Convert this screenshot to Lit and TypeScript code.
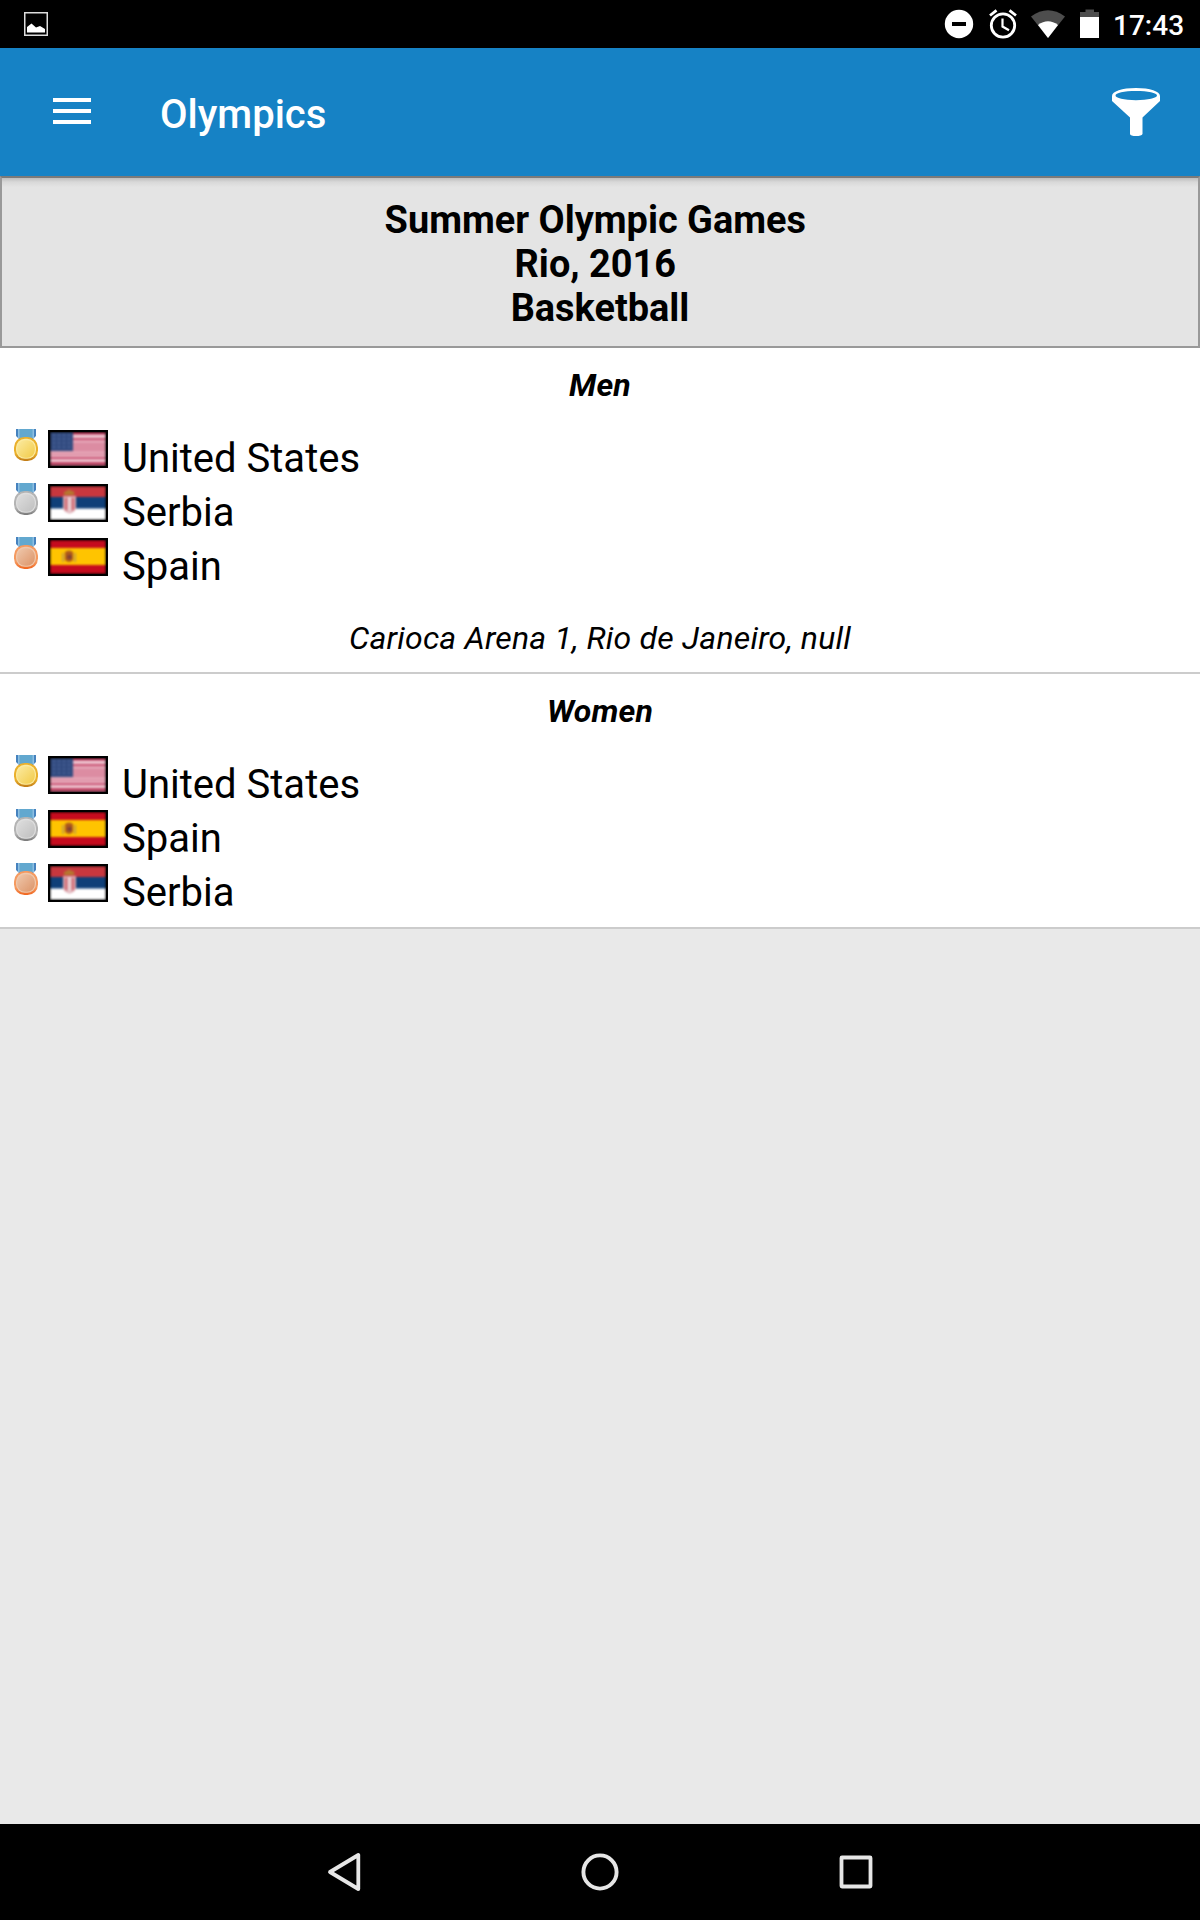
import { LitElement, html, css, svg } from "lit";
import { customElement, property } from "lit/decorators.js";

type Medal = "gold" | "silver" | "bronze";
type Country = "us" | "rs" | "es";
interface Result { medal: Medal; country: Country; }
interface Competition { title: string; results: Result[]; venue?: string; }

const NAMES: Record<Country, string> = { us: "United States", rs: "Serbia", es: "Spain" };

const COMPETITIONS: Competition[] = [
  {
    title: "Men",
    results: [
      { medal: "gold", country: "us" },
      { medal: "silver", country: "rs" },
      { medal: "bronze", country: "es" },
    ],
    venue: "Carioca Arena 1, Rio de Janeiro, null",
  },
  {
    title: "Women",
    results: [
      { medal: "gold", country: "us" },
      { medal: "silver", country: "es" },
      { medal: "bronze", country: "rs" },
    ],
  },
];

// Face highlight, face shade, rim, lower rim.
const MEDAL_COLORS: Record<Medal, [string, string, string, string]> = {
  gold: ["#fbeaa0", "#f2cb48", "#eab02c", "#c07a14"],
  silver: ["#dedede", "#bfbfbf", "#b4b4b4", "#777777"],
  bronze: ["#efc8ac", "#dc9468", "#f59a60", "#f0641c"],
};

@customElement("medal-icon")
export class MedalIcon extends LitElement {
  @property() kind: Medal = "gold";
  static styles = css`
    :host { display: block; width: 32px; height: 32px; overflow: hidden; }
    svg { display: block; overflow: visible; filter: blur(0.6px); }
  `;
  render() {
    const [light, mid, edge, dark] = MEDAL_COLORS[this.kind];
    return html`<svg width="32" height="32" viewBox="0 0 32 32">
      <defs>
        <linearGradient id="face" x1="0" y1="0" x2="1" y2="1">
          <stop offset="0" stop-color=${light}></stop><stop offset="1" stop-color=${mid}></stop>
        </linearGradient>
        <linearGradient id="rim" x1="0" y1="0" x2="0" y2="1">
          <stop offset="0" stop-color=${edge}></stop><stop offset="0.7" stop-color=${edge}></stop><stop offset="1" stop-color=${dark}></stop>
        </linearGradient>
      </defs>
      <path d="M6 -2H26V7L23 10H9L6 7Z" fill="#4682be"></path>
      <path d="M8 -2H9.800V9H8ZM22.200 -2H24V9H22.200Z" fill="#8cc0e2"></path>
      <path d="M9.800 -2H22.200V10H9.800Z" fill="#62a8cf"></path>
      <rect x="4" y="8" width="24" height="24" rx="10.500" fill="url(#rim)"></rect>
      <rect x="6" y="9.800" width="20" height="20" rx="8.800" fill=${light}></rect>
      <rect x="7.200" y="11.200" width="17.600" height="17.600" rx="7.800" fill="url(#face)"></rect>
    </svg>`;
  }
}

@customElement("country-flag")
export class CountryFlag extends LitElement {
  @property() code: Country = "us";
  static styles = css`
    :host { display: block; box-sizing: border-box; width: 60px; height: 38px; border: 2px solid #000; background: #000; overflow: hidden; }
    svg { display: block; filter: blur(0.8px); }
  `;
  private art() {
    switch (this.code) {
      case "us":
        return svg`
          <rect width="56" height="34" fill="#dc8ca2"></rect>
          <path d="M0 1H56M0 31.500H56" stroke="#b5294e" stroke-width="2"></path>
          <path d="M0 4.500H56M0 28.500H56" stroke="#f5dbe2" stroke-width="2"></path>
          <path d="M0 9.500H56M0 20.500H56M0 24H56" stroke="#eab5c3" stroke-width="1.400"></path>
          <path d="M0 7H56M0 26.300H56" stroke="#c44468" stroke-width="1.600"></path>
          <rect width="23" height="19" fill="#324b80"></rect>
          <path d="M3 3H22M3 7H22M3 11H22M3 15H22" stroke="#4d689a" stroke-width="1.400" stroke-dasharray="2 3"></path>`;
      case "rs":
        return svg`
          <rect width="56" height="12" fill="#c8373e"></rect>
          <rect y="11" width="56" height="12" fill="#0f3f78"></rect>
          <rect y="22.500" width="56" height="11.500" fill="#fff"></rect>
          <path d="M14 9C13 4 17 6 19 3C21 6 26 4 24 9Z" fill="#b5782f"></path>
          <path d="M13 10H26V22Q25 26 19.500 27.500Q14 26 13 22Z" fill="#dca7ae"></path>
          <path d="M16 12V24M23 12V24" stroke="#cf6069" stroke-width="1.800"></path>
          <path d="M19.500 11V26" stroke="#f3e3e5" stroke-width="1.800"></path>`;
      default:
        return svg`
          <rect width="56" height="34" fill="#c60b1e"></rect>
          <rect y="8" width="56" height="17" fill="#ffc400"></rect>
          <path d="M13 13V22M25 13V22" stroke="#c9a13a" stroke-width="2"></path>
          <path d="M15 12Q19 9 23 12V20Q19 24 15 20Z" fill="#ad5a1d"></path>
          <circle cx="19.500" cy="17" r="2.200" fill="#7b3f36"></circle>`;
    }
  }
  render() {
    return html`<svg width="56" height="34" viewBox="0 0 56 34">
      ${this.art()}
      <rect x="0" y="0" width="56" height="34" fill="none" stroke="#000" stroke-width="0.800"></rect>
    </svg>`;
  }
}

@customElement("app-root")
export class AppRoot extends LitElement {
  static styles = css`
    :host { display: flex; flex-direction: column; width: 1200px; height: 1920px; background: #e9e9e9; color: #000; font-family: Roboto, sans-serif; overflow: hidden; }
    svg { display: block; }
    .status { flex: none; height: 48px; background: #000; color: #fff; display: flex; align-items: center; justify-content: space-between; padding: 0 16px 0 24px; }
    .tray { display: flex; align-items: center; }
    .clock { font-size: 28px; font-weight: 500; line-height: 46px; margin-left: 13px; padding-top: 3px; width: 71px; white-space: nowrap; }
    .bar { flex: none; height: 128px; box-sizing: border-box; background: #1682c5; color: #fff; display: flex; align-items: center; padding: 0 40px 0 53px; }
    .menu { margin-top: -2px; }
    .bar h1 { flex: 1; margin: 4px 0 0 69px; font-size: 40px; font-weight: 500; line-height: 47px; }
    .header { flex: none; box-sizing: border-box; height: 172px; border: 2px solid #999; border-top-color: #7a7a7a; padding: 20px 0 0; background: linear-gradient(#bdbdbd, #d8d8d8 4px, #e4e4e4 9px); text-align: center; font-size: 37.900px; font-weight: 700; line-height: 44px; }
    .line { white-space: pre; }
    .card { flex: none; background: #fff; border-bottom: 2px solid #ccc; }
    .title { margin: 0; padding-top: 18px; text-align: center; font-size: 32px; line-height: 38px; font-weight: 700; font-style: italic; letter-spacing: 0.150px; }
    .results { padding: 25px 0 0 10px; }
    .results:last-child { padding-bottom: 10px; }
    .row { display: flex; height: 54px; align-items: flex-start; }
    .row country-flag { margin: 1px 0 0 6px; }
    .name { margin: 6px 0 0 14px; font-size: 40px; line-height: 47px; }
    .venue { padding: 28px 0 15px; text-align: center; font-size: 32px; line-height: 38px; font-style: italic; letter-spacing: 0.200px; }
    .nav { flex: none; margin-top: auto; height: 96px; background: #000; display: flex; justify-content: center; gap: 160px; }
  `;

  private statusBar() {
    return html`<div class="status">
      <svg width="24" height="24" viewBox="0 0 24 24">
        <rect x="0.750" y="0.750" width="22.500" height="22.500" fill="none" stroke="#ddd" stroke-width="1.500"></rect>
        <path d="M3 20.500V15L7.500 11.500L12 15.500L16 14L21 17V20.500Z" fill="#fff"></path>
      </svg>
      <div class="tray">
        <svg width="156" height="48" viewBox="944 0 156 48">
          <circle cx="959" cy="24" r="14.200" fill="#fff"></circle><path d="M952 24H966" stroke="#000" stroke-width="4"></path>
          <circle cx="1003" cy="25.500" r="11.700" fill="none" stroke="#fff" stroke-width="2.800"></circle>
          <path d="M1002.500 18.500V26.500L1009 30.300" fill="none" stroke="#fff" stroke-width="2.200"></path>
          <path d="M990 15.500L996.500 10.300M1016 15.500L1009.500 10.300" stroke="#fff" stroke-width="2.800"></path>
          <path d="M1048 38L1031 16.500Q1048 4 1065 16.500Z" fill="#4d4d4d"></path>
          <path d="M1048 38L1038 25Q1048 17.500 1058 25Z" fill="#fff"></path>
          <path d="M1080 12H1085.500V9.500H1094V12H1099V17H1080Z" fill="#4d4d4d"></path>
          <rect x="1080" y="17" width="19" height="21" fill="#fff"></rect>
        </svg>
        <span class="clock">17:43</span>
      </div>
    </div>`;
  }

  private section(c: Competition) {
    return html`<section class="card">
      <h2 class="title">${c.title}</h2>
      <div class="results">
        ${c.results.map(
          (r) => html`<div class="row">
            <medal-icon .kind=${r.medal}></medal-icon>
            <country-flag .code=${r.country}></country-flag>
            <span class="name">${NAMES[r.country]}</span>
          </div>`
        )}
      </div>
      ${c.venue ? html`<div class="venue">${c.venue}</div>` : null}
    </section>`;
  }

  render() {
    return html`
      ${this.statusBar()}
      <header class="bar">
        <svg class="menu" width="38" height="26" viewBox="0 0 38 26"><path d="M0 2H38M0 13H38M0 24H38" stroke="#fff" stroke-width="4"></path></svg>
        <h1>Olympics</h1>
        <svg width="48" height="48" viewBox="0 0 48 48">
          <path fill="#fff" fill-rule="evenodd" d="M24 0C38 0 48 3.500 48 8V13L30.500 29.500V46Q29.500 48 24 48T18 46V29.500L0 13V8C0 3.500 10 0 24 0ZM24 3C12 3 3.500 5 3.500 7.500S12 12.200 24 12.200S45 10 45 7.500S36 3 24 3Z"></path>
        </svg>
      </header>
      <div class="header">
        <div class="line">Summer Olympic Games&nbsp;</div>
        <div class="line">Rio, 2016&nbsp;</div>
        <div class="line">Basketball</div>
      </div>
      ${COMPETITIONS.map((c) => this.section(c))}
      <nav class="nav">
        <svg width="96" height="96" viewBox="296 1824 96 96"><path d="M330 1872L358.300 1855V1889Z" fill="none" stroke="#e6e6e6" stroke-width="3.800" stroke-linejoin="round"></path></svg>
        <svg width="96" height="96" viewBox="552 1824 96 96"><circle cx="600" cy="1872" r="16.600" fill="none" stroke="#e6e6e6" stroke-width="3.900"></circle></svg>
        <svg width="96" height="96" viewBox="808 1824 96 96"><rect x="841.500" y="1857.500" width="29" height="29" rx="0.500" fill="none" stroke="#e6e6e6" stroke-width="3.800" stroke-linejoin="round"></rect></svg>
      </nav>`;
  }
}
